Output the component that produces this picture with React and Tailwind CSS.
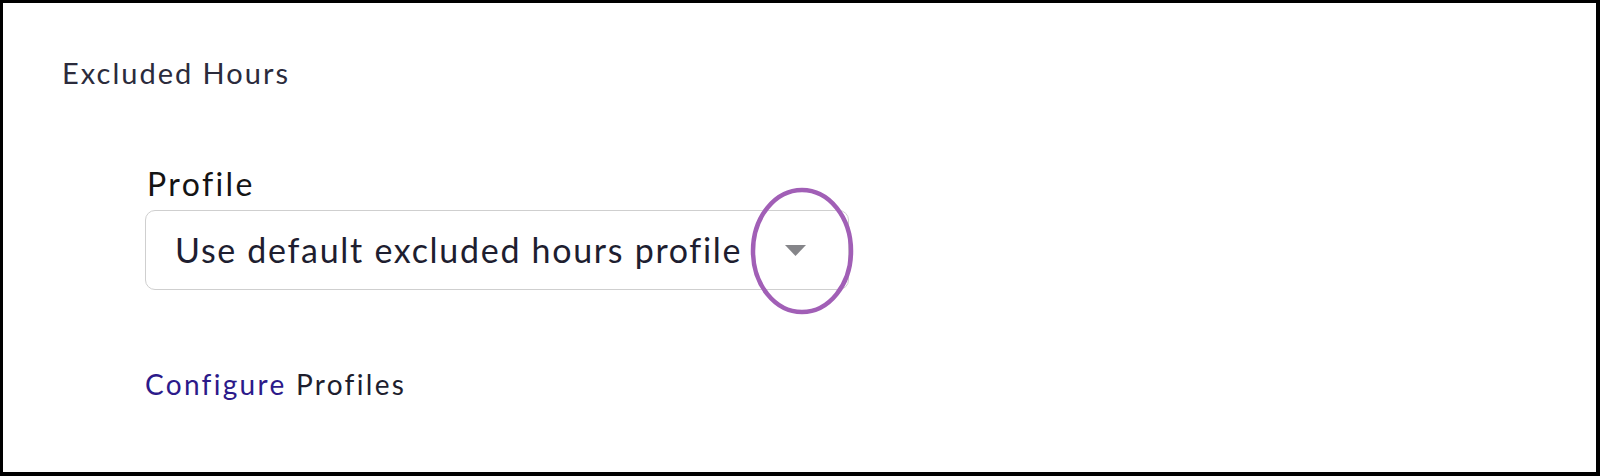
export default function App() {
  return (
    <div className="w-[1600px] h-[476px] bg-white border-t-[3px] border-l-[3px] border-r-4 border-b-4 border-black font-['Lato',sans-serif] overflow-hidden">
      {/* Section title */}
      <h2 className="ml-[59px] mt-[52px] text-[29px] leading-[36px] tracking-[2px] text-[#2b2b3c] font-normal">
        Excluded Hours
      </h2>

      <div className="ml-[142px] mt-[73px]">
        <label className="block pl-[2px] text-[32px] leading-[40px] tracking-[2.4px] text-[#141414]">Profile</label>

        {/* Select box */}
        <div className="relative mt-[6px] w-[704px] h-[80px] rounded-[10px] border-[1.5px] border-[#cfcfcf] flex items-center justify-between pl-[29px] pr-[42px]">
          <span className="text-[34px] leading-none tracking-[1.7px] text-[#1e1e30]">Use default excluded hours profile</span>
          <svg width="21" height="11" viewBox="0 0 21 11" className="shrink-0">
            <polygon points="0,0 21,0 10.5,11" fill="#858589" />
          </svg>

          {/* annotation ellipse */}
          <svg
            className="absolute left-[604px] top-[-24px] pointer-events-none"
            width="104"
            height="128"
            viewBox="0 0 104 128"
          >
            <ellipse cx="52" cy="64" rx="49" ry="61" fill="white" fillOpacity="0" stroke="#a15fb6" strokeWidth="4.5" />
          </svg>
        </div>

        <p className="mt-[77px] text-[28px] leading-[34px] tracking-[2.3px] text-[#1e1e2e]">
          <a href="#" className="text-[#2c1a8a]">Configure</a> Profiles
        </p>
      </div>
    </div>
  )
}
